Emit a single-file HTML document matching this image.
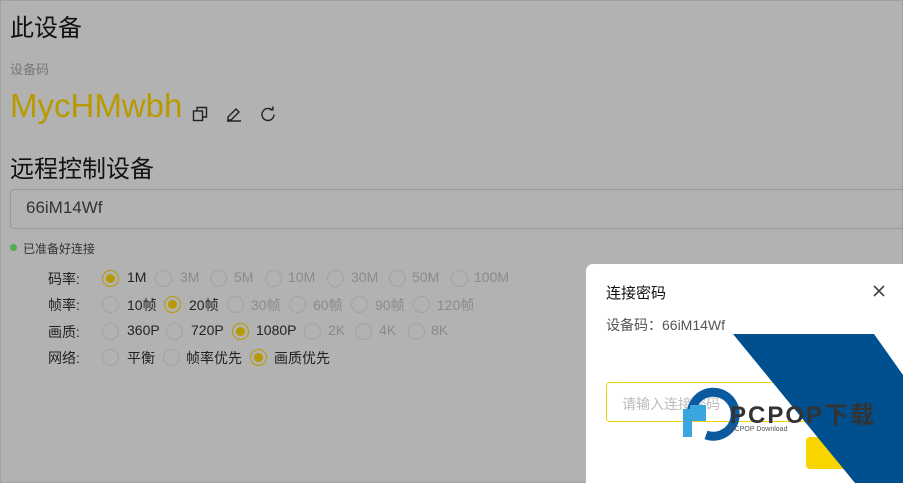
<!DOCTYPE html>
<html><head><meta charset="utf-8"><style>
*{margin:0;padding:0;box-sizing:border-box}
html,body{width:903px;height:483px;overflow:hidden}
body{background:#b2b2b2;position:relative;font-family:"Liberation Sans","Noto Sans CJK SC",sans-serif}
.a{position:absolute;white-space:nowrap}
.r{position:absolute;width:17px;height:17px;border:1px solid #a2a2a2;border-radius:50%}
.r.on{border-color:#b89a00}
.r.on:after{content:"";position:absolute;left:3px;top:3px;width:9px;height:9px;border-radius:50%;background:#b89a00}
.l{position:absolute;font-size:14px;color:#8a8a8a;white-space:nowrap}
.l.d{color:#222}
.k{position:absolute;font-size:14px;color:#222;left:48px}
</style></head><body>
<div class="a" style="left:0;top:0;width:903px;height:483px;border:1px solid #a0a0a0"></div>
<div class="a" style="left:10px;top:8px;font-size:24px;color:#111">此设备</div>
<div class="a" style="left:10px;top:59px;font-size:13px;color:#777">设备码</div>
<div class="a" style="left:10px;top:87px;font-size:33px;color:#b89a00">MycHMwbh</div>
<svg class="a" style="left:192px;top:106px" width="16" height="16" viewBox="0 0 16 16" fill="none" stroke="#222" stroke-width="1.4"><rect x="1.5" y="5" width="9" height="9.5"/><path d="M5 5V1.5h9.5V11H10.5"/></svg>
<svg class="a" style="left:226px;top:106px" width="16" height="16" viewBox="0 0 16 16" fill="none" stroke="#222" stroke-width="1.4"><path d="M2 11l8-8 3 3-8 8H2z M1 15h14"/></svg>
<svg class="a" style="left:260px;top:106px" width="16" height="16" viewBox="0 0 16 16" fill="none" stroke="#222" stroke-width="1.4"><path d="M12.5 4.5A6 6 0 1 0 14 8.5"/><path d="M9.5 3.5h3.5V0.5"/></svg>
<div class="a" style="left:10px;top:149px;font-size:24px;color:#111">远程控制设备</div>
<div class="a" style="left:10px;top:189px;width:893px;height:40px;border:1px solid #999;border-right:none;border-radius:4px 0 0 4px"></div>
<div class="a" style="left:26px;top:198px;font-size:17px;color:#333">66iM14Wf</div>
<div class="a" style="left:10px;top:244px;width:7px;height:7px;border-radius:50%;background:#4caf50"></div>
<div class="a" style="left:23px;top:240px;font-size:12px;color:#333">已准备好连接</div>

<div class="k" style="top:269px">码率:</div>
<div class="r on" style="left:102px;top:270px"></div><div class="l d" style="left:127px;top:269px">1M</div>
<div class="r" style="left:155px;top:270px"></div><div class="l" style="left:180px;top:269px">3M</div>
<div class="r" style="left:210px;top:270px"></div><div class="l" style="left:234px;top:269px">5M</div>
<div class="r" style="left:265px;top:270px"></div><div class="l" style="left:288px;top:269px">10M</div>
<div class="r" style="left:327px;top:270px"></div><div class="l" style="left:351px;top:269px">30M</div>
<div class="r" style="left:389px;top:270px"></div><div class="l" style="left:412px;top:269px">50M</div>
<div class="r" style="left:451px;top:270px"></div><div class="l" style="left:474px;top:269px">100M</div>

<div class="k" style="top:295px">帧率:</div>
<div class="r" style="left:102px;top:296px"></div><div class="l d" style="left:127px;top:295px">10帧</div>
<div class="r on" style="left:164px;top:296px"></div><div class="l d" style="left:189px;top:295px">20帧</div>
<div class="r" style="left:227px;top:296px"></div><div class="l" style="left:251px;top:295px">30帧</div>
<div class="r" style="left:289px;top:296px"></div><div class="l" style="left:313px;top:295px">60帧</div>
<div class="r" style="left:351px;top:296px"></div><div class="l" style="left:375px;top:295px">90帧</div>
<div class="r" style="left:413px;top:296px"></div><div class="l" style="left:437px;top:295px">120帧</div>

<div class="k" style="top:322px">画质:</div>
<div class="r" style="left:102px;top:323px"></div><div class="l d" style="left:127px;top:322px">360P</div>
<div class="r" style="left:166px;top:323px"></div><div class="l d" style="left:191px;top:322px">720P</div>
<div class="r on" style="left:232px;top:323px"></div><div class="l d" style="left:256px;top:322px">1080P</div>
<div class="r" style="left:304px;top:323px"></div><div class="l" style="left:328px;top:322px">2K</div>
<div class="r" style="left:355px;top:323px"></div><div class="l" style="left:379px;top:322px">4K</div>
<div class="r" style="left:408px;top:323px"></div><div class="l" style="left:431px;top:322px">8K</div>

<div class="k" style="top:348px">网络:</div>
<div class="r" style="left:102px;top:349px"></div><div class="l d" style="left:127px;top:348px">平衡</div>
<div class="r" style="left:163px;top:349px"></div><div class="l d" style="left:186px;top:348px">帧率优先</div>
<div class="r on" style="left:250px;top:349px"></div><div class="l d" style="left:274px;top:348px">画质优先</div>

<div class="a" style="left:586px;top:264px;width:330px;height:225px;background:#fff;border-radius:7px"></div>
<div class="a" style="left:606px;top:282px;font-size:15px;color:#111">连接密码</div>
<svg class="a" style="left:873px;top:285px" width="12" height="12" viewBox="0 0 12 12" stroke="#444" stroke-width="1.6"><path d="M1 1l10 10M11 1L1 11"/></svg>
<div class="a" style="left:606px;top:315px;font-size:14px;color:#555">设备码：66iM14Wf</div>
<div class="a" style="left:606px;top:382px;width:240px;height:40px;border:1px solid #f5d000;border-radius:4px"></div>
<div class="a" style="left:622px;top:394px;font-size:14px;color:#bbb">请输入连接密码</div>
<div class="a" style="left:806px;top:437px;width:120px;height:32px;background:#f9d500;border-radius:4px"></div>
<svg class="a" style="left:0;top:0" width="903" height="483"><polygon points="733,334 874,334 903,375 903,483 855,483" fill="#004f8f"/>
<path d="M692 420 a22 22 0 1 1 14 15" fill="none" stroke="#0b5aa0" stroke-width="9"/>
<rect x="683" y="409" width="9" height="28" fill="#3aa6e0"/><rect x="690" y="405" width="16" height="16" fill="#3aa6e0"/>
<text x="730" y="423" font-family="Liberation Sans,Noto Sans CJK SC,sans-serif" font-size="24" font-weight="bold" fill="#333" letter-spacing="2">PCPOP下载</text>
<text x="730" y="431" font-family="Liberation Sans,sans-serif" font-size="7" fill="#555">PCPOP Download</text></svg>
</body></html>
